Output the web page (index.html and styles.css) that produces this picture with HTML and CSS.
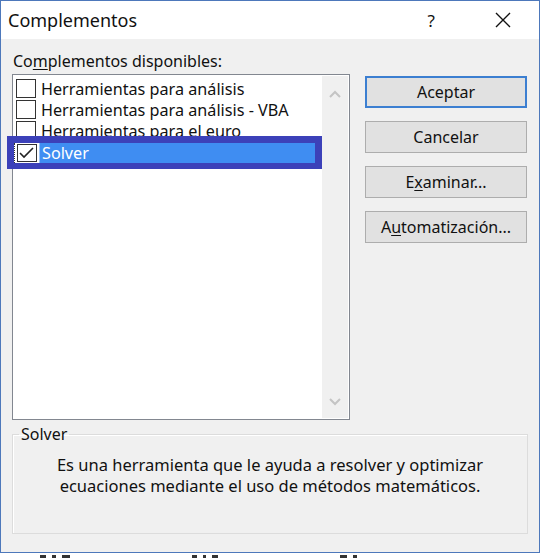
FILE: index.html
```html
<!DOCTYPE html>
<html lang="es">
<head>
    <meta charset="UTF-8">
    <title>Complementos</title>
    <link rel="stylesheet" href="styles.css">
</head>
<body>
    <div class="window">
        <div class="titlebar">
            <span class="title">Complementos</span>
            <span class="help">?</span>
            <svg class="close" width="16" height="16" viewBox="0 0 16 16">
                <path d="M1 1 L15 15 M15 1 L1 15" stroke="#111" stroke-width="1.4" fill="none"/>
            </svg>
        </div>

        <div class="content">
            <div class="left-col">
                <div class="list-label">Co<u>m</u>plementos disponibles:</div>
                <div class="list-box">
                    <div class="items">
                        <div class="item"><span class="check"></span>Herramientas para análisis</div>
                        <div class="item"><span class="check"></span>Herramientas para análisis - VBA</div>
                        <div class="item"><span class="check"></span>Herramientas para el euro</div>
                        <div class="item"><span class="check"></span>Solver</div>
                    </div>
                    <div class="scrollbar">
                        <svg width="12" height="8" viewBox="0 0 12 8"><path d="M1 7 L6 2 L11 7" stroke="#c4c4c4" stroke-width="2" fill="none"/></svg>
                        <svg width="12" height="8" viewBox="0 0 12 8"><path d="M1 1 L6 6 L11 1" stroke="#c4c4c4" stroke-width="2" fill="none"/></svg>
                    </div>
                </div>
            </div>

            <div class="buttons">
                <button class="default">Aceptar</button>
                <button>Cancelar</button>
                <button>E<u>x</u>aminar...</button>
                <button>A<u>u</u>tomatización...</button>
            </div>
        </div>

        <fieldset class="details">
            <legend>Solver</legend>
            <p>Es una herramienta que le ayuda a resolver y optimizar<br>ecuaciones mediante el uso de métodos matemáticos.</p>
        </fieldset>

        <!-- highlight drawn over the selected add-in -->
        <div class="highlight">
            <div class="hl-check">
                <svg width="20" height="18" viewBox="0 0 20 18">
                    <rect x="0.5" y="0.5" width="19" height="17" fill="#fff" stroke="#333"/>
                    <path d="M3 9 L7 13 L16 4" stroke="#222" stroke-width="1.6" fill="none"/>
                </svg>
            </div>
            <div class="hl-text">Solver</div>
        </div>
    </div>

    <div class="below">
        <span style="width: 6px"></span><span style="width: 4px"></span><span style="width: 8px"></span>
        <span class="gap"></span>
        <span style="width: 5px"></span><span style="width: 3px"></span><span style="width: 6px"></span>
        <span class="gap"></span>
        <span style="width: 7px"></span><span style="width: 4px"></span>
    </div>
</body>
</html>
```

FILE: styles.css
```css
* {
    box-sizing: border-box;
}
body {
    margin: 0;
    background: #fff;
    font-family: "Noto Sans", "Open Sans", sans-serif;
    color: #111;
}
.window {
    position: relative;
    width: 540px;
    height: 553px;
    background: #f0f0f0;
    border: 1px solid #4d78bb;
}
.titlebar {
    height: 38px;
    background: #fff;
    display: flex;
    align-items: center;
    padding-left: 7px;
}
.title {
    font-size: 18px;
    flex: 1;
}
.help {
    font-size: 17px;
    margin-right: 60px;
}
.close {
    margin-right: 28px;
}
.content {
    display: flex;
    padding: 10px 0 0 11px;
    gap: 15px;
}
.left-col {
    width: 338px;
}
.list-label {
    font-size: 16px;
    height: 25px;
    line-height: 25px;
    padding-left: 1px;
}
.list-label u, .buttons u {
    text-decoration-thickness: 1px;
    text-underline-offset: 2px;
}
.list-box {
    height: 346px;
    background: #fff;
    border: 1px solid #828790;
    display: flex;
}
.items {
    flex: 1;
    padding: 3px 0 0 3px;
}
.item {
    display: flex;
    align-items: center;
    height: 21px;
    font-size: 16.2px;
    gap: 5px;
    white-space: nowrap;
}
.check {
    flex: none;
    width: 20px;
    height: 19px;
    border: 1px solid #333;
    background: #fff;
}
.scrollbar {
    width: 26px;
    margin: 1px 1px 1px 0;
    background: #f0f0f0;
    display: flex;
    flex-direction: column;
    justify-content: space-between;
    align-items: center;
    padding: 14px 0 12px;
}
.buttons {
    display: flex;
    flex-direction: column;
    gap: 13px;
    padding-top: 27px;
}
button {
    width: 162px;
    height: 32px;
    background: #e1e1e1;
    border: 1px solid #adadad;
    font-family: inherit;
    font-size: 16px;
    color: #111;
    padding: 0;
}
button.default {
    border: 2px solid #3c7fd1;
}
.details {
    margin: 7px 0 0 11px;
    width: 516px;
    height: 107px;
    border: 1px solid #dcdcdc;
    box-shadow: inset 1px 1px 0 #fff;
    padding: 0;
}
.details legend {
    font-size: 16px;
    padding: 0 2px;
    margin-left: 6px;
    line-height: 14px;
}
.details p {
    margin: 13px 0 0;
    text-align: center;
    font-size: 16.5px;
    line-height: 21px;
}
.highlight {
    position: absolute;
    left: 6px;
    top: 135px;
    width: 315px;
    height: 33px;
    background: #3c41b9;
    padding: 7px 7px 6px 7px;
    display: flex;
}
.hl-check {
    width: 25px;
    background: #fff;
    display: flex;
    align-items: center;
    padding-left: 2px;
    border-left: 1px dotted #333;
}
.hl-text {
    flex: 1;
    background: #3f8df2;
    color: #fff;
    font-size: 16.2px;
    line-height: 20px;
    padding-left: 2px;
    border-left: 1px solid #9cc4f8;
}
.below {
    display: flex;
    gap: 6px;
    padding: 2px 0 0 40px;
}
.below span {
    height: 4px;
    background: #333;
}
.below .gap {
    width: 110px;
    background: transparent;
}
```
